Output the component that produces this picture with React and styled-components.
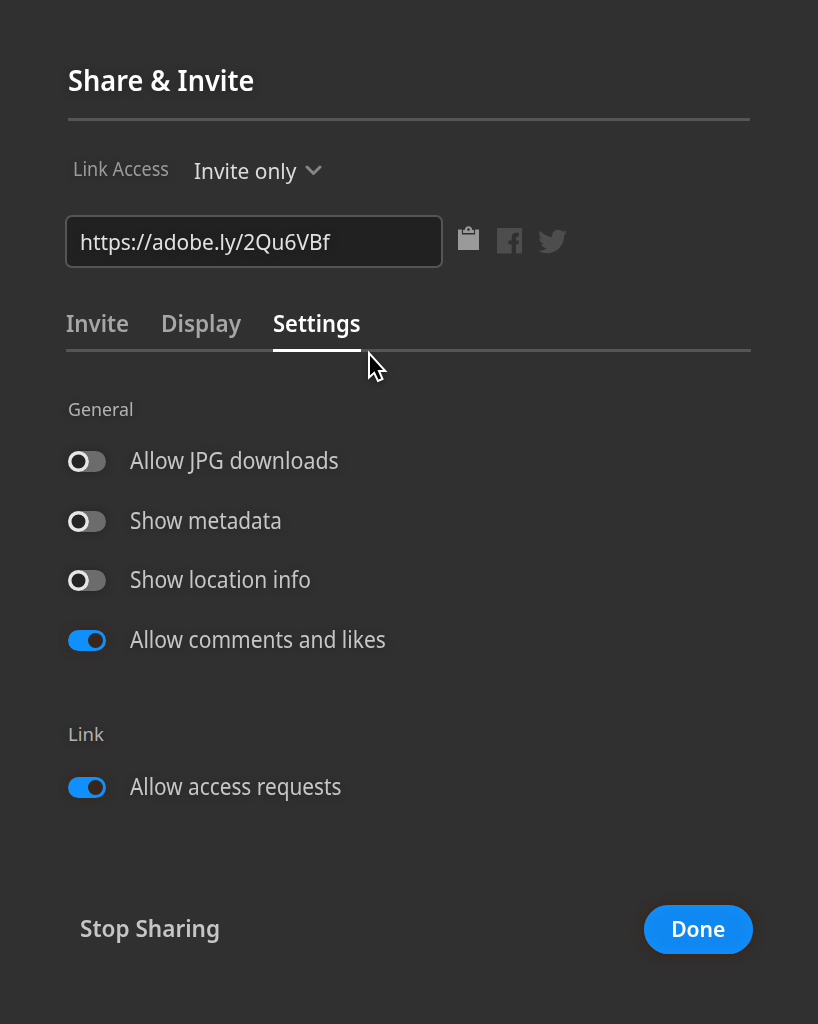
import React from 'react';
import styled, { createGlobalStyle } from 'styled-components';
import { FaTwitter } from 'react-icons/fa';

const GlobalStyle = createGlobalStyle`
  * { box-sizing: border-box; }
  body { margin: 0; background: #303030; }
  button { border: 0; padding: 0; background: none; font: inherit; color: inherit; }
`;

const Dialog = styled.main`
  display: flex;
  flex-direction: column;
  width: 818px;
  height: 1024px;
  padding: 61px 65px 70px;
  background: #303030;
  color: #c6c6c6;
  font-family: 'Noto Sans', 'Open Sans', sans-serif;
  text-shadow: 0 1px 10px rgba(0, 0, 0, 0.3);
`;

const Text = styled.span`
  display: inline-block;
  flex: none;
  white-space: nowrap;
  transform: scaleX(${(p) => p.$squeeze || 1});
  transform-origin: ${(p) => p.$origin || 'left'} center;
`;

const Header = styled.header`
  height: 60px;
  margin: 0 3px;
  border-bottom: 3px solid #555;
`;

const Title = styled.h1`
  margin: 0;
  color: #fff;
  font-size: 28px;
  font-weight: 600;
  line-height: 38px;
`;

const AccessRow = styled.div`
  display: flex;
  align-items: flex-start;
  height: 30px;
  margin-top: 35px;
  padding-left: 8px;
`;

const AccessLabel = styled.span`
  width: 121px;
  color: #9b9b9b;
  font-size: 19px;
  line-height: 26px;
`;

const AccessSelect = styled.button`
  display: flex;
  align-items: center;
  color: #dcdcdc;
  font-size: 22px;
  line-height: 28px;
`;

const AccessValue = styled.span`
  width: 111px;
  text-align: left;
`;

const LinkRow = styled.div`
  display: flex;
  align-items: center;
  height: 53px;
  margin-top: 29px;
`;

const LinkField = styled.div`
  width: 378px;
  height: 53px;
  margin-right: 15px;
  padding: 0 0 0 13px;
  border: 2px solid #555;
  border-radius: 7px;
  background: #212121;
  color: #e2e2e2;
  font-size: 22px;
  line-height: 49px;
`;

const ShareIcon = styled.span`
  display: flex;
  flex: none;
  width: ${(p) => p.$width}px;
  margin-right: ${(p) => p.$gap || 0}px;
  padding-bottom: ${(p) => p.$lift || 0}px;
  color: ${(p) => p.$color};
`;

const Tabs = styled.nav`
  position: relative;
  display: flex;
  height: 43px;
  margin: 41px 2px 0 1px;
  border-bottom: 3px solid #555;
`;

const Tab = styled.button`
  display: flex;
  width: ${(p) => p.$width}px;
  height: 43px;
  margin-right: ${(p) => p.$gap}px;
  border-bottom: 3px solid ${(p) => (p.$active ? '#fff' : 'transparent')};
  color: ${(p) => (p.$active ? '#fff' : '#a6a6a6')};
  font-size: 23px;
  font-weight: 600;
  line-height: 28px;
`;

const Pointer = styled.svg`
  position: absolute;
  left: 300px;
  top: 41px;
  overflow: visible;
  filter: drop-shadow(0 2px 3px rgba(0, 0, 0, 0.35));
`;

const Section = styled.section`
  margin-top: ${(p) => p.$top}px;
  padding-left: 3px;
`;

const SectionTitle = styled.h2`
  height: 26px;
  margin: 0 0 10px;
  color: #b3b3b3;
  font-size: 18.5px;
  font-weight: 400;
  line-height: 26px;
`;

const Option = styled.label`
  display: flex;
  align-items: center;
  height: 59.6px;
  font-size: 23px;
`;

const OptionLabel = styled.span`
  margin-left: 24px;
  line-height: 32px;
  padding-bottom: 3px;
`;

const Switch = styled.span`
  display: flex;
  flex: none;
  justify-content: ${(p) => (p.$on ? 'flex-end' : 'flex-start')};
  align-items: center;
  width: 38px;
  height: 21px;
  padding: ${(p) => (p.$on ? '0 3px' : '0')};
  border-radius: 11px;
  background: ${(p) => (p.$on ? '#1090fc' : '#6c6c6c')};
  box-shadow: 0 0 10px ${(p) => (p.$on ? 'rgba(67, 32, 8, 0.7)' : 'rgba(0, 0, 0, 0.25)')};
`;

const Knob = styled.span`
  width: ${(p) => (p.$on ? 15 : 21)}px;
  height: ${(p) => (p.$on ? 15 : 21)}px;
  border-radius: 50%;
  background: ${(p) => (p.$on ? '#38261c' : '#242424')};
  box-shadow: ${(p) => (p.$on ? 'none' : 'inset 0 0 0 3.5px #e6e6e6')};
`;

const Footer = styled.footer`
  display: flex;
  align-items: center;
  justify-content: space-between;
  height: 50px;
  margin-top: auto;
  padding-left: 15px;
  font-size: 23px;
  font-weight: 600;
`;

const StopButton = styled.button`
  padding-bottom: 2px;
  line-height: 32px;
`;

const DoneButton = styled.button`
  width: 109px;
  height: 49px;
  padding-bottom: 2px;
  border-radius: 25px;
  background: #1088f2;
  box-shadow: 0 0 11px rgba(67, 32, 8, 0.9), inset 0 0 12px #1292ff;
  color: #fff;
  font-size: 22px;
  line-height: 46px;
  text-shadow: none;
`;

const Chevron = () => (
  <svg width="17" height="12" viewBox="0 0 17 12" fill="none">
    <path d="M2 3l6.500 6.500L15 3" stroke="#858585" strokeWidth="3" strokeLinecap="round" strokeLinejoin="round" />
  </svg>
);

const Clipboard = () => (
  <svg width="21" height="25" viewBox="0 0 21 25" fill="currentColor">
    <path d="M0 3.500h3.900v5h13.200v-5H21v20.500H0z" />
    <path fillRule="evenodd" d="M5 7V4h1.700C7 1.500 8.400.200 10.500.200s3.500 1.300 3.800 3.800H16v3zM10.500 2.300a1.300 1.300 0 1 0 0 2.600 1.300 1.300 0 0 0 0-2.600z" />
  </svg>
);

const Facebook = () => (
  <svg width="25" height="26" viewBox="0 0 25 26" fill="currentColor">
    <path d="M1 0h23Q25 0 25 1v23.600q0 1-1 1h-5v-9.400h2.500l.400-3.800H19V9.900q0-1.500 1.500-1.500h1.300V4.800h-2.300q-4.800 0-4.800 4.600v3h-3.200v3.800h3.200v9.400H1q-1 0-1-1V1Q0 0 1 0z" />
  </svg>
);

const tabs = [
  { name: 'Invite', width: 63, gap: 32, squeeze: 0.97 },
  { name: 'Display', width: 80, gap: 32, squeeze: 0.98 },
  { name: 'Settings', width: 88, gap: 0, squeeze: 0.955, active: true },
];

const generalOptions = [
  { label: 'Allow JPG downloads', on: false, squeeze: 0.929 },
  { label: 'Show metadata', on: false, squeeze: 0.902 },
  { label: 'Show location info', on: false, squeeze: 0.912 },
  { label: 'Allow comments and likes', on: true, squeeze: 0.914 },
];

const SwitchOption = ({ label, on, squeeze }) => (
  <Option>
    <Switch $on={on}>
      <Knob $on={on} />
    </Switch>
    <OptionLabel>
      <Text $squeeze={squeeze}>{label}</Text>
    </OptionLabel>
  </Option>
);

export default function App() {
  return (
    <>
      <GlobalStyle />
      <Dialog>
        <Header>
          <Title>
            <Text $squeeze={0.97}>Share &amp; Invite</Text>
          </Title>
        </Header>

        <AccessRow>
          <AccessLabel>
            <Text $squeeze={0.95}>Link Access</Text>
          </AccessLabel>
          <AccessSelect>
            <AccessValue>
              <Text $squeeze={0.95}>Invite only</Text>
            </AccessValue>
            <Chevron />
          </AccessSelect>
        </AccessRow>

        <LinkRow>
          <LinkField>
            <Text $squeeze={0.95}>https://adobe.ly/2Qu6VBf</Text>
          </LinkField>
          <ShareIcon $width={21} $gap={18} $lift={6} $color="#9a9a9a">
            <Clipboard />
          </ShareIcon>
          <ShareIcon $width={25} $gap={16} $lift={2} $color="#4d4d4d">
            <Facebook />
          </ShareIcon>
          <ShareIcon $width={29} $color="#4d4d4d">
            <FaTwitter size={29} />
          </ShareIcon>
        </LinkRow>

        <Tabs>
          {tabs.map((tab) => (
            <Tab key={tab.name} $width={tab.width} $gap={tab.gap} $active={tab.active}>
              <Text $squeeze={tab.squeeze}>{tab.name}</Text>
            </Tab>
          ))}
          <Pointer width="22" height="34" viewBox="0 0 22 34">
            <path
              d="M3 3v24.500l5.200-4.700 3.800 8.200 4.500-2-3.500-8h6.300z"
              fill="#000"
              stroke="#fff"
              strokeWidth="2"
            />
          </Pointer>
        </Tabs>

        <Section $top={44}>
          <SectionTitle>
            <Text $squeeze={0.96}>General</Text>
          </SectionTitle>
          {generalOptions.map((option) => (
            <SwitchOption key={option.label} {...option} />
          ))}
        </Section>

        <Section $top={51}>
          <SectionTitle>
            <Text $squeeze={1}>Link</Text>
          </SectionTitle>
          <SwitchOption label="Allow access requests" on squeeze={0.905} />
        </Section>

        <Footer>
          <StopButton>
            <Text $squeeze={0.98}>Stop Sharing</Text>
          </StopButton>
          <DoneButton>
            <Text $squeeze={0.96} $origin="center">Done</Text>
          </DoneButton>
        </Footer>
      </Dialog>
    </>
  );
}
